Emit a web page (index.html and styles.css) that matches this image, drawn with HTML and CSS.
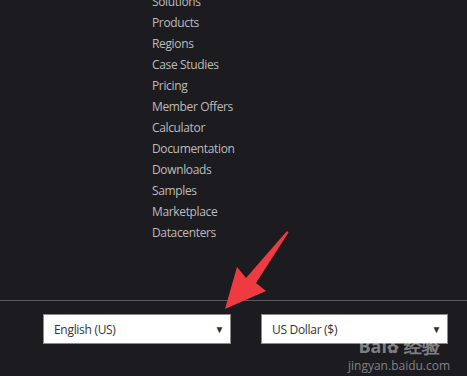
FILE: index.html
```html
<!DOCTYPE html>
<html lang="en">
<head>
    <meta charset="UTF-8">
    <title>Footer</title>
    <link rel="stylesheet" href="styles.css">
</head>
<body>
    <div class="page">
        <!-- links do rodape -->
        <ul class="links">
            <li>Solutions</li>
            <li>Products</li>
            <li>Regions</li>
            <li>Case Studies</li>
            <li>Pricing</li>
            <li>Member Offers</li>
            <li>Calculator</li>
            <li>Documentation</li>
            <li>Downloads</li>
            <li>Samples</li>
            <li>Marketplace</li>
            <li>Datacenters</li>
        </ul>

        <div class="footer">
            <div class="select wide">
                <span>English (US)</span>
                <span class="caret">&#9660;</span>
            </div>
            <div class="select">
                <span>US Dollar ($)</span>
                <span class="caret">&#9660;</span>
            </div>
        </div>

        <!-- seta vermelha -->
        <svg class="arrow" width="80" height="90" viewBox="0 0 80 90">
            <path d="M66 6 L67.5 7.5 L35 58 L45 66 L4 84 L16 42 L25 53 Z" fill="#ee3b42"/>
        </svg>

        <div class="mark">
            <div class="mark-top">Bai<span class="paw">&#10047;</span> 经验</div>
            <div class="mark-url">jingyan.baidu.com</div>
        </div>
    </div>
</body>
</html>
```
FILE: styles.css
```css
body {
    margin: 0;
    background-color: #1c1b20;
    font-family: "Open Sans", "Noto Sans", sans-serif;
}
.page {
    position: relative;
    width: 467px;
    height: 376px;
    overflow: hidden;
}
.links {
    list-style: none;
    margin: -9px 0 0 0;
    padding: 0 0 0 152px;
    height: 309px;
}
.links li {
    color: #bcbcbc;
    font-size: 12px;
    line-height: 21px;
    letter-spacing: -0.35px;
}
.footer {
    border-top: 1px solid #5a5a5c;
    display: flex;
    gap: 30px;
    padding: 13px 0 0 43px;
}
.select {
    box-sizing: border-box;
    width: 187px;
    height: 30px;
    background-color: #ffffff;
    border: 1px solid #8a8a8a;
    display: flex;
    align-items: center;
    justify-content: space-between;
    padding: 0 6px 0 10px;
    font-size: 12px;
    color: #333333;
    letter-spacing: -0.3px;
}
.select.wide {
    width: 188px;
}
.caret {
    font-size: 10px;
    color: #333333;
}
.arrow {
    position: absolute;
    left: 221px;
    top: 225px;
}
.mark {
    position: absolute;
    left: 348px;
    top: 337px;
    color: rgba(255, 255, 255, 0.45);
    text-align: center;
}
.mark-top {
    font-size: 18px;
    font-weight: bold;
    line-height: 18px;
}
.paw {
    font-size: 14px;
}
.mark-url {
    margin-top: 2px;
    font-size: 12px;
    line-height: 14px;
}
```
